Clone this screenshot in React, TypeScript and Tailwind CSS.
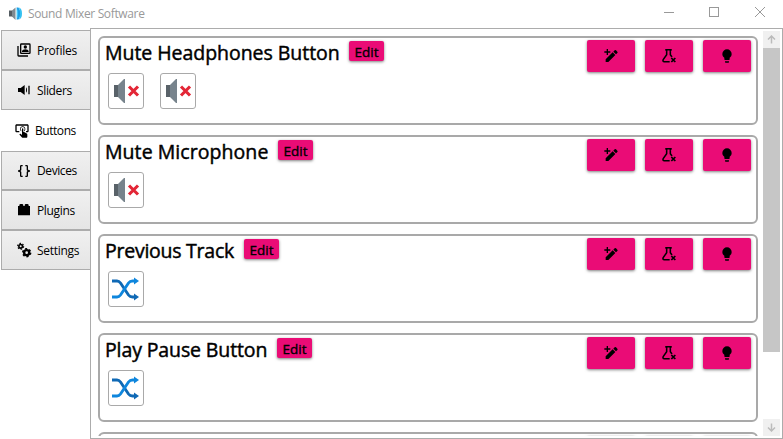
import React from "react";

const PATHS = {
  profiles:
    "M4,6H2V20A2,2 0 0,0 4,22H18V20H4V6M20,2A2,2 0 0,1 22,4V16A2,2 0 0,1 20,18H8A2,2 0 0,1 6,16V4A2,2 0 0,1 8,2H20M20,4H8V16H20V4M14,5A2.5,2.5 0 1,1 14,10A2.5,2.5 0 1,1 14,5M9,14C9,12 12,11 14,11C16,11 19,12 19,14V15H9V14Z",
  volume:
    "M3 9V15H7L13 19.500V4.500L7 9H3M15 8V16Q16.500 15 16.500 12T15 8M18.500 5.500H20.500V18.500H18.500Z",
  tap: "M13 5C15.21 5 17 6.79 17 9C17 10.5 16.2 11.77 15 12.46V11.24C15.61 10.69 16 9.89 16 9C16 7.34 14.66 6 13 6S10 7.34 10 9C10 9.89 10.39 10.69 11 11.24V12.46C9.8 11.77 9 10.5 9 9C9 6.79 10.79 5 13 5M20 20.5C19.97 21.32 19.32 21.97 18.5 22H13C12.62 22 12.26 21.85 12 21.57L8 17.37L8.74 16.6C8.93 16.39 9.2 16.28 9.5 16.28H9.7L12 18V9C12 8.45 12.45 8 13 8S14 8.45 14 9V13.47L15.21 13.6L19.15 15.79C19.68 16.03 20 16.56 20 17.14V20.5M20 2H4C2.9 2 2 2.9 2 4V12C2 13.11 2.9 14 4 14H8V12H4V4H20V12H18V14H20C21.1 14 22 13.11 22 12V4C22 2.9 21.11 2 20 2Z",
  braces:
    "M8,3A2,2 0 0,0 6,5V9A2,2 0 0,1 4,11H3V13H4A2,2 0 0,1 6,15V19A2,2 0 0,0 8,21H10V19H8V14A2,2 0 0,0 6,12A2,2 0 0,0 8,10V5H10V3M16,3A2,2 0 0,1 18,5V9A2,2 0 0,0 20,11H21V13H20A2,2 0 0,0 18,15V19A2,2 0 0,1 16,21H14V19H16V14A2,2 0 0,1 18,12A2,2 0 0,1 16,10V5H14V3H16Z",
  brick:
    "M19 6V5A2 2 0 0 0 17 3H15A2 2 0 0 0 13 5V6H11V5A2 2 0 0 0 9 3H7A2 2 0 0 0 5 5V6H3V20H21V6Z",
  bulb: "M12,2A7,7 0 0,0 5,9C5,11.38 6.19,13.47 8,14.74V17A1,1 0 0,0 9,18H15A1,1 0 0,0 16,17V14.74C17.81,13.47 19,11.38 19,9A7,7 0 0,0 12,2M9,21A1,1 0 0,0 10,22H14A1,1 0 0,0 15,21V20H9V21Z",
};

function Glyph({ d, size = 16 }: { d: string; size?: number }) {
  return (
    <svg width={size} height={size} viewBox="0 0 24 24" fill="#000" className="shrink-0">
      <path d={d} />
    </svg>
  );
}

function CogsIcon() {
  return (
    <svg width="16" height="16" viewBox="0 0 24 24" fill="none" stroke="#000" className="shrink-0">
      <circle cx="7" cy="6.500" r="2.7" strokeWidth="2.4" />
      <circle cx="7" cy="6.500" r="4.4" strokeWidth="1.8" strokeDasharray="2.3 2.3" />
      <circle cx="16" cy="16" r="3.8" strokeWidth="3.6" />
      <circle cx="16" cy="16" r="5.9" strokeWidth="2.4" strokeDasharray="3.1 3.08" />
    </svg>
  );
}

function WandIcon() {
  return (
    <svg width="16" height="16" viewBox="0 0 24 24" className="shrink-0">
      <path d="M4 21v-4L14.500 6.500l4 4L8 21H4zM15.500 5.500l2-2q1-1 2 0l2 2q1 1 0 2l-2 2z" />
      <path d="M5.500 1.500h2v3.500h3.500v2H7.500v3.500h-2V7H2V5h3.500z" />
    </svg>
  );
}

function FlaskIcon() {
  return (
    <svg width="16" height="16" viewBox="0 0 24 24" fill="none" stroke="#000" strokeWidth="2.300" className="shrink-0">
      <path d="M13 20.500H5q-3 0-1.700-3L8.500 10V4q-1 0-1-1.500h7.500q0 1.500-1 1.500v6l2.500 3.500" />
      <path d="M15.500 15l6 6M21.500 15l-6 6" strokeWidth="2.600" />
    </svg>
  );
}

function AppLogo() {
  return (
    <svg width="14" height="14" viewBox="0 0 14 14" className="shrink-0">
      <path d="M0 3.500h3v6H0z" fill="#545c62" />
      <path d="M3 3.500l3.500-3v12.500l-3.500-3.500z" fill="#7e8a92" />
      <path d="M7.500 1q4.500 5.500 0 11z" fill="#55d4fb" />
      <path d="M7.500 .5h2q4 6 0 12h-2q2.500-6 0-12z" fill="#1b9fe8" />
      <path d="M10 .5q3 1 3 6t-3 6q2-6 0-12z" fill="#35c1f1" />
    </svg>
  );
}

function MutedSpeaker() {
  return (
    <svg width="28" height="28" viewBox="0 0 28 28">
      <path d="M2 8h5v12H2z" fill="#596269" />
      <path d="M6 8l6-6h1v24h-1l-6-6z" fill="#77838c" />
      <path d="M17 9.500l9 9M26 9.500l-9 9" stroke="#e32636" strokeWidth="3.100" />
    </svg>
  );
}

function Shuffle() {
  return (
    <svg width="28" height="28" viewBox="0 0 28 28" fill="none" strokeWidth="2.900">
      <path d="M0 6h5q2 0 3.500 2l8 12q1.500 2 4 2h2" stroke="#0f69b5" />
      <path d="M0 22h5q2 0 3.500-2l8-12q1.500-2 4-2h2" stroke="#0e86dd" />
      <path d="M22 2.500l5 3.500-5 3.500z" fill="#0e86dd" />
      <path d="M22 18.500l5 3.500-5 3.500z" fill="#0f69b5" />
    </svg>
  );
}

const TABS = [
  { label: "Profiles", icon: <Glyph d={PATHS.profiles} />, box: "h-10", track: "tracking-[-0.250px]" },
  { label: "Sliders", icon: <Glyph d={PATHS.volume} />, box: "h-10", track: "tracking-[-0.350px]" },
  { label: "Buttons", icon: <Glyph d={PATHS.tap} />, box: "h-10", track: "tracking-[-0.450px]" },
  { label: "Devices", icon: <Glyph d={PATHS.braces} />, box: "h-[39px]", track: "tracking-[-0.400px]" },
  { label: "Plugins", icon: <Glyph d={PATHS.brick} />, box: "h-10", track: "tracking-[-0.350px]" },
  { label: "Settings", icon: <CogsIcon />, box: "h-10", track: "tracking-[-0.300px]" },
];

const CARDS = [
  { title: "Mute Headphones Button", width: "w-[235px]", track: "tracking-[-0.040px]", icons: ["mute", "mute"] },
  { title: "Mute Microphone", width: "w-[164px]", track: "tracking-[0.060px]", icons: ["mute"] },
  { title: "Previous Track", width: "w-[130px]", track: "tracking-[-0.250px]", icons: ["shuffle"] },
  { title: "Play Pause Button", width: "w-[163px]", track: "tracking-[-0.120px]", icons: ["shuffle"] },
];

function ActionButton({ children }: { children?: React.ReactNode }) {
  return (
    <button className="flex h-8 w-12 items-center justify-center rounded-[2px] bg-[#ea0c76] shadow-[0_1px_3px_rgba(0,0,0,0.5)]">
      {children}
    </button>
  );
}

function Card({ title, width, track, icons }: { title: string; width: string; track: string; icons: string[] }) {
  return (
    <section className="flex h-[89px] shrink-0 justify-between rounded-md border-2 border-[#a9a9a9] px-[5px]">
      <div>
        <div className="flex h-[30px] items-start">
          <h2 className={`${width} ${track} text-[19.500px] leading-[30px] whitespace-nowrap [-webkit-text-stroke:0.450px_#000]`}>
            {title}
          </h2>
          <button className="mt-[3px] ml-[9px] flex h-5 w-[35px] items-center justify-center rounded-[2px] bg-[#ea0c76] pt-[2px] text-[13.500px] shadow-[0_1px_3px_rgba(0,0,0,0.5)] [-webkit-text-stroke:0.350px_#000]">
            Edit
          </button>
        </div>
        <div className="mt-[5px] ml-[3px] flex gap-4">
          {icons.map((icon, i) => (
            <div key={i} className="flex size-9 items-center justify-center rounded-[3px] border border-[#a9a9a9]">
              {icon === "mute" ? <MutedSpeaker /> : <Shuffle />}
            </div>
          ))}
        </div>
      </div>
      <div className="mt-[2px] flex items-start gap-[10px]">
        <ActionButton><WandIcon /></ActionButton>
        <ActionButton><FlaskIcon /></ActionButton>
        <ActionButton><Glyph d={PATHS.bulb} /></ActionButton>
      </div>
    </section>
  );
}

export default function App() {
  return (
    <div className="flex h-[439px] w-[783px] flex-col overflow-hidden bg-white font-['Open_Sans','Noto_Sans',sans-serif] text-black">
      <header className="flex h-7 shrink-0 items-center justify-between pr-4 pl-[9px]">
        <div className="flex h-6 items-center gap-[5px]">
          <AppLogo />
          <span className="text-[12px] tracking-[-0.350px] text-[#999]">Sound Mixer Software</span>
        </div>
        <svg width="104" height="12" viewBox="0 0 104 12" fill="none" stroke="#999" className="-mt-1">
          <path d="M1 6.500h10" />
          <rect x="46.500" y="1.500" width="9" height="9" />
          <path d="M92 1l10 10M102 1L92 11" />
        </svg>
      </header>
      <div className="flex h-[411px]">
        <nav className="flex w-[90px] shrink-0 flex-col pt-[2px]">
          {TABS.map((t) =>
            t.label === "Buttons" ? (
              <div key={t.label} className="flex h-[41px] items-center gap-[5px] pl-[14px] text-[12px]">
                {t.icon}
                <span className={t.track}>{t.label}</span>
              </div>
            ) : (
              <div
                key={t.label}
                className={`${t.box} ml-px flex items-center gap-[5px] border border-r-0 border-[#acacac] bg-linear-to-b from-[#f0f0f0] to-[#e5e5e5] pl-[14px] text-[12px]`}
              >
                {t.icon}
                <span className={`${t.track} pt-px`}>{t.label}</span>
              </div>
            ),
          )}
        </nav>
        <main className="flex h-[411px] w-[693px] border border-[#acacac] pt-[2px] pr-[2px] pb-[2px] pl-[7px]">
          <div className="flex w-[660px] flex-col gap-[10px] overflow-hidden pt-[5px]">
            {CARDS.map((c) => (
              <Card key={c.title} {...c} />
            ))}
            <section className="flex h-[89px] shrink-0 justify-end gap-[10px] rounded-md border-2 border-[#a9a9a9] px-[5px] pt-[2px]">
              <ActionButton />
              <ActionButton />
              <ActionButton />
            </section>
          </div>
          <div className="ml-[5px] flex w-[17px] flex-col">
            <div className="flex h-[17px] items-center justify-center bg-[#f0f0f0]">
              <svg width="9" height="9" viewBox="0 0 9 9" fill="none" stroke="#bbb" strokeWidth="1.500">
                <path d="M4.500 8.500V1M1 4.500L4.500 1 8 4.500" />
              </svg>
            </div>
            <div className="h-[304px] bg-[#c6c6c6]" />
            <div className="mt-auto flex h-[17px] items-center justify-center bg-[#f0f0f0]">
              <svg width="9" height="9" viewBox="0 0 9 9" fill="none" stroke="#bbb" strokeWidth="1.500">
                <path d="M4.500 .5V8M1 4.500L4.500 8 8 4.500" />
              </svg>
            </div>
          </div>
        </main>
      </div>
    </div>
  );
}
